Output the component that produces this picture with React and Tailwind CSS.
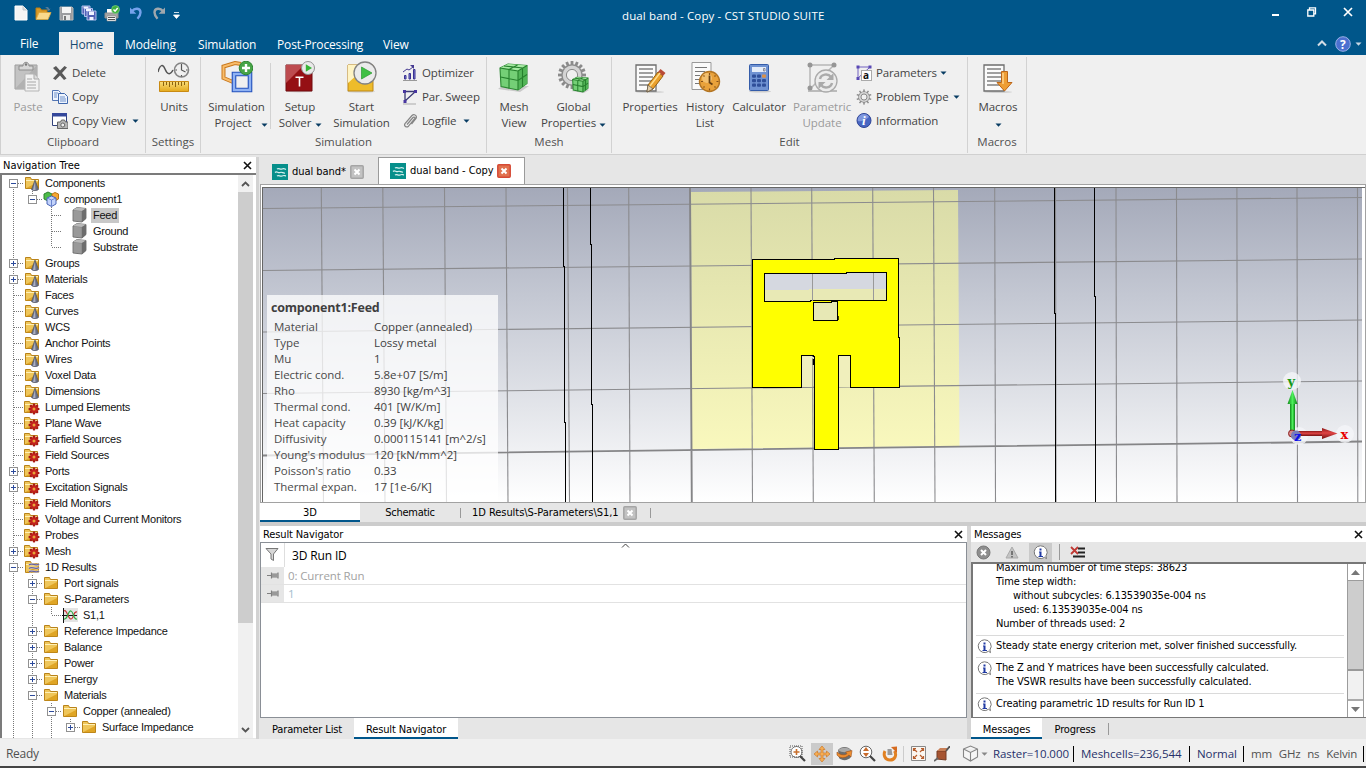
import React from "react";

const UI = "font-['Open_Sans',sans-serif]";
const TAHOMA = "font-['DejaVu_Sans_Condensed','Noto_Sans',sans-serif]";

function Caret({ className = "" }) {
  return (
    <svg width="7" height="4" viewBox="0 0 7 4" className={className}>
      <path d="M0.5 0.5h6L3.5 3.8z" fill="currentColor" />
    </svg>
  );
}

/* ---------- title bar icons ---------- */
const NewFile = () => (
  <svg width="14" height="16" viewBox="0 0 14 16"><path d="M1 1h8l4 4v10H1z" fill="#f4f4f4" stroke="#fff" /><path d="M9 1v4h4" fill="#dcdcdc" stroke="#b9c2c9" strokeWidth=".8" /></svg>
);
const OpenFile = () => (
  <svg width="17" height="16" viewBox="0 0 17 16"><path d="M1 14V3h4l1.500 2H12v3" fill="#d89a28" stroke="#b87c14" /><path d="M10 3c2-2 4-1 4 1l1.500-.5L14 6l-2.500-1.200 1.200-.3C12.500 3.500 11.500 3 10 3z" fill="#5f7f99" /><path d="M1 14.500L4 7.500h12L13 14.500z" fill="#f9d98b" stroke="#e0a83c" strokeWidth=".8" /></svg>
);
const SaveFile = () => (
  <svg width="15" height="15" viewBox="0 0 15 15"><path d="M1 1h12l1 1v12H1z" fill="#9c9da0" stroke="#b5b5b5" /><path d="M3 1h9v6H3z" fill="#f5f5f5" /><path d="M4 9h7v5H4z" fill="#e8e8e8" /><path d="M5 10h2v4H5z" fill="#777" /></svg>
);
const SaveAll = () => (
  <svg width="16" height="16" viewBox="0 0 16 16"><g stroke="#bfcaf4" strokeWidth=".9" fill="#5161b5"><path d="M1 1h8v8H1z" /><path d="M3.500 3.500h8v8h-8z" /><path d="M6 6h9v9H6z" /></g><path d="M2.500 1.500h5v2h-5zM5 4h5v2H5zM8 6.500h5v3.500H8zM8.500 12h4v3h-4z" fill="#f1f4ff" /></svg>
);
const PrintOk = () => (
  <svg width="16" height="17" viewBox="0 0 16 17"><path d="M3 4h8v5H3z" fill="#fff" /><path d="M1 8h13v5H1z" fill="#a6a6a6" stroke="#8e8e8e" /><path d="M3 11h9v5H3z" fill="#fafafa" stroke="#888" strokeWidth=".6" /><path d="M4 12.500h7M4 14.500h7" stroke="#555" /><circle cx="11.500" cy="4.500" r="4" fill="#3fb13f" stroke="#8bd88b" strokeWidth=".6" /><path d="M9.500 4.500l1.600 1.700 2.600-3.200" fill="none" stroke="#fff" strokeWidth="1.400" /></svg>
);
const Undo = ({ flip, color }) => (
  <svg width="14" height="14" viewBox="0 0 14 14" className={flip ? "-scale-x-100" : ""}><path d="M3 5C6 1.500 11.500 2 11.500 6.500c0 2.500-1.500 4.500-3 6.200" fill="none" stroke={color} strokeWidth="2.400" /><path d="M1 1.500v6.300h6.300z" fill={color} /></svg>
);

/* ---------- ribbon icons, 32px ---------- */
const PasteIcon = () => (
  <svg width="32" height="32" viewBox="0 0 32 32"><path d="M3 4h22v24H3z" fill="#c3c3c3" stroke="#9d9d9d" /><path d="M3 28L25 4v24z" fill="#b1b1b1" /><path d="M7 5h4c0-5 6-5 6 0h4v4H7z" fill="#d7d7d7" stroke="#8d8d8d" /><circle cx="14" cy="3.500" r="1.200" fill="#777" /><path d="M13 13h9l5 5v12H13z" fill="#f2f2f2" stroke="#b5b5b5" /><path d="M22 13v5h5" fill="#ddd" stroke="#aaa" /><path d="M15 18h5M15 21h9M15 24h9M15 27h9" stroke="#a8a8a8" /></svg>
);
const UnitsIcon = () => (
  <svg width="32" height="32" viewBox="0 0 32 32"><path d="M0 11C2 3 5 3 7 8s5 7 8 1" fill="none" stroke="#555" strokeWidth="1.500" /><circle cx="23.500" cy="9" r="7" fill="#f0f0f0" stroke="#858585" strokeWidth="1.600" /><path d="M23.500 4v5l4 2M23.500 3v1.500M23.500 14v1.500M17.500 9H19M28 9h1.500" fill="none" stroke="#555" strokeWidth="1.200" /><defs><linearGradient id="rul" x1="0" y1="0" x2="0" y2="1"><stop offset="0" stopColor="#f9df7d" /><stop offset="1" stopColor="#e4a91c" /></linearGradient></defs><path d="M1.500 20.500h29v10h-29z" fill="url(#rul)" stroke="#c98a12" /><path d="M5.500 21v4M8.500 21v3M11.500 21v5M14.500 21v3M17.500 21v5M20.500 21v3M23.500 21v4M26.500 21v3" stroke="#8b6310" /></svg>
);
const ProjectIcon = () => (
  <svg width="32" height="32" viewBox="0 0 32 32"><path d="M20 3l-6-1L2.500 5.500V17L12 21" fill="none" stroke="#c9771b" strokeWidth="4" /><path d="M20 3l-6-1L2.500 5.500V17L12 21" fill="none" stroke="#f8bd6c" strokeWidth="2" /><path d="M13 13h16v16H13z" fill="none" stroke="#2452bc" strokeWidth="4.600" /><path d="M13 13h16v16H13z" fill="none" stroke="#8fb2f3" strokeWidth="2.400" /><circle cx="25" cy="7" r="6.800" fill="#47a447" stroke="#2e8532" /><path d="M25 3v8M21 7h8" stroke="#fff" strokeWidth="2.400" /></svg>
);
const SetupIcon = () => (
  <svg width="32" height="32" viewBox="0 0 32 32"><ellipse cx="15" cy="30" rx="14" ry="1.500" fill="#d4d4d4" /><path d="M2 4h26v26H2z" fill="#951014" stroke="#710b0f" /><path d="M2 4h18L2 22z" fill="#bd4b4f" /><path d="M11.500 15.500h8v1.500h-3.200v8.500h-1.600V17h-3.200z" fill="#fff" /><circle cx="24" cy="7" r="6.500" fill="#e9e9e9" stroke="#919191" /><path d="M21.800 3.300v7.400L28 7z" fill="#35b435" /></svg>
);
const StartIcon = () => (
  <svg width="32" height="32" viewBox="0 0 32 32"><ellipse cx="15" cy="30.500" rx="14" ry="1.300" fill="#d4d4d4" /><path d="M2 4h25v26H2z" fill="#eebc2b" stroke="#bd8717" /><path d="M2 4h20L2 22z" fill="#fff4c4" /><circle cx="19" cy="12" r="11" fill="#ebebeb" stroke="#828282" strokeWidth="1.300" /><path d="M15.500 6v12L26 12z" fill="#3fc044" stroke="#299a30" strokeWidth=".7" /></svg>
);
const CubeShape = ({ w = 1.1 }) => (
  <g><path d="M2 7l8-4 19 1.500v18L20 29 3 25.500z" fill="#74cf76" stroke="#2c8832" strokeWidth={w} /><path d="M2 7l8-4 19 1.500L20 10z" fill="#a6eaa3" /><path d="M20 10l9-5.500v18L20 29z" fill="#52b557" /><path d="M2 7l18 3 9-5.500M20 10v19M11 8.500v19M24.500 7v19M2.500 16L20 19.500l9-6M6 5l19 2M11 8.500L19.500 4" fill="none" stroke="#26802d" strokeWidth={w} /></g>
);
const Cube = () => (
  <svg width="32" height="32" viewBox="0 0 32 32"><path d="M0 28l4-3h27l-9 6z" fill="#c9c9c9" /><CubeShape /></svg>
);
function Gear({ size = 16, r = 8, teeth = 10, color = "#8b8b8b", inner = "#f0f0f0" }) {
  const list = Array.from({ length: teeth }, (_, i) => (i * 360) / teeth);
  return (
    <g>
      {list.map((a) => (<rect key={a} x={size - r * 0.1} y={size - r} width={r * 0.2} height={r * 0.5} fill={color} transform={`rotate(${a} ${size} ${size})`} />))}
      <circle cx={size} cy={size} r={r * 0.76} fill={color} />
      <circle cx={size} cy={size} r={r * 0.67} fill="#d4d4d4" />
      <circle cx={size} cy={size} r={r * 0.4} fill={inner} stroke={color} />
    </g>
  );
}
const GlobalIcon = () => (
  <svg width="32" height="32" viewBox="0 0 32 32"><g transform="translate(-1 -1)"><Gear size={15} r={14} teeth={16} /></g><path d="M13 30l16-2 2 1-5 3z" fill="#ccc" /><g transform="translate(13.500 14.500) scale(.57)"><CubeShape w={1.8} /></g></svg>
);
const Page = ({ x = 2, w = 20, h = 26, y = 3 }) => (
  <g><path d={`M${x} ${y}h${w}v${h}h-${w}z`} fill="#fbfbfb" stroke="#6e6e6e" strokeWidth="1.300" />{[4, 8, 12, 16, 20].map((d) => (<path key={d} d={`M${x + 3} ${y + d}h${w - 6}`} stroke="#555" strokeWidth="1.100" />))}</g>
);
const PropsIcon = () => (
  <svg width="32" height="32" viewBox="0 0 32 32"><ellipse cx="16" cy="31" rx="14" ry="1" fill="#d0d0d0" /><Page y={4} /><path d="M14 24L24 11l5 4-10 13-6 3z" fill="#eaa02c" stroke="#94600f" /><path d="M24 11l2.500-3 5 4-2.500 3z" fill="#b94b36" /><path d="M14 24l5 4-6 3z" fill="#e6d1ad" stroke="#555" strokeWidth=".7" /><path d="M16 25L26 12" stroke="#ffdd8b" strokeWidth="1.400" /></svg>
);
const HistoryIcon = () => (
  <svg width="32" height="32" viewBox="0 0 32 32"><path d="M3 1.500h19v27H3z" fill="#fafafa" stroke="#999" /><path d="M6 6.500h12M6 10.500h10M6 14.500h5M6 18.500h4M6 22.500h5" stroke="#777" /><circle cx="20.500" cy="20.500" r="10" fill="#e9a23b" stroke="#b37523" strokeWidth="1.400" /><circle cx="18" cy="17" r="5" fill="#f5ca82" opacity=".75" /><path d="M20.500 14.500v7l3 2" fill="none" stroke="#623d13" strokeWidth="1.700" /><path d="M20.500 12v2M20.500 27.500v2M12 20.500h2M27.500 20.500h2M14.500 14.500l1 1M26.500 14.500l-1 1M14.500 26.500l1-1M26.500 26.500l-1-1" stroke="#86511a" strokeWidth="1.200" /></svg>
);
const CalcIcon = () => (
  <svg width="32" height="32" viewBox="0 0 32 32"><ellipse cx="17" cy="30.500" rx="11" ry="1" fill="#ccc" /><rect x="6.500" y="3.500" width="19" height="26" rx="1" fill="#6f92d2" stroke="#345ca9" /><path d="M9 6h14v5H9z" fill="#e5edf9" /><path d="M20.500 7.500h1.500v2.500h-1.500z" fill="none" stroke="#667" strokeWidth=".7" />{[13.500, 18, 22.500].map((y) => [9, 14, 19].map((x) => (<rect key={x + "-" + y} x={x} y={y} width="4" height="3.200" rx="1" fill={x === 19 && y === 13.500 ? "#db9148" : "#2f4f99"} />)))}</svg>
);
const UpdateIcon = () => (
  <svg width="32" height="32" viewBox="0 0 32 32"><path d="M2 30h29" stroke="#bbb" strokeWidth="2" /><path d="M4 4h24M4 4v24L28 4" fill="none" stroke="#b7b7b7" strokeWidth="1.500" /><circle cx="4" cy="4" r="2.500" fill="#969696" /><circle cx="28" cy="4" r="2.500" fill="#969696" /><circle cx="4" cy="27" r="2.500" fill="#969696" /><circle cx="20" cy="20" r="11" fill="#ececec" stroke="#aaa" strokeWidth="1.300" /><path d="M14 18c1-5 8-6 11-2M26 22c-1 5-8 6-11 2" fill="none" stroke="#aaa" strokeWidth="2.400" /><path d="M27.500 12v7h-7zM12.500 28v-7h7z" fill="#aaa" /></svg>
);
const MacrosIcon = () => (
  <svg width="32" height="32" viewBox="0 0 32 32"><ellipse cx="16" cy="31" rx="14" ry="1" fill="#d0d0d0" /><Page y={4} /><path d="M19.500 10.500h6v11h4.500L22.500 30l-7.500-8.500h4.500z" fill="#ee9e35" stroke="#bc6619" /><path d="M21 12v11" stroke="#ffd48f" strokeWidth="1.500" /></svg>
);

/* ---------- ribbon icons, 16px ---------- */
const S = ({ children }) => (<svg width="16" height="16" viewBox="0 0 16 16" className="shrink-0">{children}</svg>);
const DeleteI = () => <S><path d="M1 3l3-2 4 4.500L12.500 1 15 2.500 10 8l4.500 5.500L12 15l-4-4.500L3.500 15 1 13.500 6 8z" fill="#595959" /></S>;
const CopyI = () => <S><path d="M.5 1.500h6l2 2v8h-8z" fill="#eef4fe" stroke="#5375b3" /><path d="M6.500 4.500h6l3 3v7h-9z" fill="#eef4fe" stroke="#4168ac" /><path d="M2 4h4M2 6h3M2 8h3M8 8h5M8 10h6M8 12h6" stroke="#6f91c9" /></S>;
const CopyViewI = () => <S><path d="M.5 .5h14v12H.5z" fill="#fff" stroke="#32427c" /><path d="M0 0h15v3.500H0z" fill="#35489b" /><path d="M5.500 9h3l1-2h3l1 2h2.500v6.500H5.500z" fill="#b7b7b7" stroke="#666" /><circle cx="10.800" cy="12" r="2" fill="#eee" stroke="#666" /></S>;
const OptI = () => <S><path d="M2.500 10.500h1.500v3.500H2.500zM7 8.500h1.500V14H7zM11.500 4.500H13V14h-1.500z" fill="#8288d6" stroke="#3a3192" /><path d="M1 7l4-3 2 1 4-3" fill="none" stroke="#463a91" /><path d="M8 0h4v4z" fill="#463a91" /><path d="M1 15.500h14" stroke="#999" /></S>;
const SweepI = () => <S><path d="M2.500 2.500h11L3 12V2.500" fill="none" stroke="#3b3a75" strokeWidth="1.300" /><path d="M1 1h3v3H1zM12 1h3v3h-3zM1.500 11h3v3h-3z" fill="#4836a0" /><path d="M1 15h13" stroke="#aaa" /></S>;
const ClipI = () => <S><g fill="none" stroke="#858585" strokeWidth="1.200"><path d="M5 11.500l6-7c1-1 2.500 0 1.700 1.200L6.500 13.200C4.500 15 1.500 13 3 10.500L10 2.500c2-2 5.500 0 4 3L9.500 11" /></g></S>;
const ParamI = () => <S><path d="M2 2h12M2 2v11L13 3" fill="none" stroke="#7161c0" /><path d="M.5.5h3v3h-3zM12.500.5h3v3h-3zM.5 12h3v3h-3z" fill="#5948b4" /><rect x="5.500" y="5.500" width="10" height="10" fill="#fff" stroke="#aaa" /><text x="7" y="13.500" className="font-['Open_Sans'] text-[10px] font-bold" fill="#111">a</text></S>;
const GearI = () => <S><Gear size={8} r={7.6} teeth={10} /></S>;
const InfoI = () => <S><circle cx="8" cy="7.500" r="7" fill="#4866c2" stroke="#2e4496" /><path d="M8 1C3 1 1 6 2 8c3 1 8-1 11-4-1-2-3-3-5-3z" fill="#93aae7" opacity=".75" /><text x="6" y="12" className="font-['Liberation_Serif'] text-[13px] font-bold italic" fill="#fff">i</text></S>;

function Big({ icon, a, b, w, caret, dim, row = "gap-1.5" }) {
  return (
    <div className={`flex shrink-0 flex-col items-center pt-1.5 text-[11.5px] leading-4 tracking-[-0.05px] ${w} ${dim ? "text-[#9b9b9b]" : "text-[#444]"}`}>
      <div className="mb-1.5 h-8">{icon}</div>
      <div className="whitespace-nowrap">{a}</div>
      <div className={`flex h-4 items-center whitespace-nowrap ${row}`}>{b}{caret && <Caret className="mt-[3px] text-[#083c63]" />}</div>
    </div>
  );
}
function Small({ icon, label, caret, gap = "ml-0.5" }) {
  return (
    <div className="flex h-6 items-center gap-1 whitespace-nowrap text-[11.5px] tracking-[-0.14px] text-[#444]">{icon}<span>{label}</span>{caret && <Caret className={`text-[#083c63] ${gap}`} />}</div>
  );
}
function Group({ label, w, children }) {
  return (
    <section className={`mt-0.5 flex h-[96px] shrink-0 flex-col border-r border-[#d2d2d2] ${w}`}>
      <div className="-mt-0.5 flex h-[79px]">{children}</div>
      <div className="text-center text-[11.5px] leading-4 text-[#505050]">{label}</div>
    </section>
  );
}

function Ribbon() {
  return (
    <div className={`flex h-[100px] shrink-0 border-b border-l border-[#d0d0d0] bg-[#f0f0f0] ${UI}`}>
      <Group label="Clipboard" w="w-[145px]">
        <Big w="w-[54px]" icon={<PasteIcon />} a="Paste" dim />
        <div className="-ml-[3px] pt-[5.5px]">
          <Small icon={<DeleteI />} label="Delete" /><Small icon={<CopyI />} label="Copy" /><Small icon={<CopyViewI />} label="Copy View" caret />
        </div>
      </Group>
      <Group label="Settings" w="w-[55px]"><Big w="w-[56px]" icon={<UnitsIcon />} a="Units" /></Group>
      <Group label="Simulation" w="w-[286px]">
        <Big w="w-[71px]" icon={<ProjectIcon />} a="Simulation" b="Project" caret row="gap-[9px] pl-[9px]" />
        <div className="-ml-0.5 mt-2 h-[66px] w-px bg-[#d2d2d2]" />
        <Big w="w-[58px]" icon={<SetupIcon />} a="Setup" b="Solver" caret row="gap-1 pl-px" />
        <Big w="w-[65px]" icon={<StartIcon />} a="Start" b="Simulation" />
        <div className="pl-2 pt-[5.5px]"><Small icon={<OptI />} label="Optimizer" /><Small icon={<SweepI />} label="Par. Sweep" /><Small icon={<ClipI />} label="Logfile" caret gap="ml-[3px]" /></div>
      </Group>
      <Group label="Mesh" w="w-[125px]">
        <Big w="w-[54px]" icon={<Cube />} a="Mesh" b="View" />
        <Big w="w-[65px]" icon={<GlobalIcon />} a="Global" b="Properties" caret row="gap-[3px]" />
      </Group>
      <Group label="Edit" w="w-[356px]">
        <div className="w-2 shrink-0" />
        <Big w="w-[60px]" icon={<PropsIcon />} a="Properties" />
        <Big w="w-[50px]" icon={<HistoryIcon />} a="History" b="List" />
        <Big w="w-[58px]" icon={<CalcIcon />} a="Calculator" />
        <Big w="w-[68px]" icon={<UpdateIcon />} a="Parametric" b="Update" dim />
        <div className="pt-[5.5px]"><Small icon={<ParamI />} label="Parameters" caret gap="-ml-px" /><Small icon={<GearI />} label="Problem Type" caret gap="ml-px" /><Small icon={<InfoI />} label="Information" /></div>
      </Group>
      <Group label="Macros" w="w-[59px]"><Big w="w-[60px]" icon={<MacrosIcon />} a="Macros" caret /></Group>
    </div>
  );
}

/* ---------- navigation tree ---------- */
function Branch({ k }) {
  const box = "fmMpP".includes(k);
  const up = "mMpPtli".includes(k);
  const down = "fmpti".includes(k);
  return (
    <svg width="19" height="16" viewBox="0 0 19 16" className="shrink-0" shapeRendering="crispEdges">
      <g stroke="#777" strokeDasharray="1 1">
        {up && <path d="M9.500 0V8" />}{down && <path d="M9.500 8V16" />}
        {k !== "i" && k !== " " && <path d="M10 8.500h9" />}
      </g>
      {box && (<g><rect x="5.500" y="4.500" width="8" height="8" fill="#fff" stroke="#919191" /><path d="M7 8.500h5" stroke="#2c4a9b" />{"pP".includes(k) && <path d="M9.500 6v5" stroke="#2c4a9b" />}</g>)}
    </svg>
  );
}
const FolderShape = () => (<g><path d="M1.500 13.500V2.500h5l1 2h7v9z" fill="#efc65a" stroke="#b9831a" /><path d="M2 5.500h12" stroke="#fff0b5" /><path d="M2 13.200L14 7v6.200z" fill="#d99a14" opacity=".75" /></g>);
const TreeIcon = ({ t }) => {
  if (t === "folder") return <S><FolderShape /></S>;
  if (t === "cone") return <S><FolderShape /><path d="M11 5l-3.500 9.500c1 1.500 6 1.500 7 0z" fill="#6b7085" stroke="#454858" strokeWidth=".6" /><path d="M11 6.500l-2 8.500h2.500z" fill="#a9afc2" /></S>;
  if (t === "gear") return <S><g transform="translate(-1 0)"><FolderShape /></g><g>{[0, 45, 90, 135].map((a) => (<rect key={a} x="8.700" y="4.500" width="2.600" height="11" rx="1" fill="#a81917" transform={`rotate(${a} 10 10)`} />))}<circle cx="10" cy="10" r="3.600" fill="#c3201e" /><circle cx="10" cy="10" r="1.500" fill="#e9a53a" /></g></S>;
  if (t === "waves") return <S><FolderShape /><path d="M5 6c3-3 6 2 10-1M5 9.500c3-3 6 2 10-1M5 13c3-3 6 2 10-1" fill="none" stroke="#e9dcc0" strokeWidth="2.400" /><path d="M5 6c3-3 6 2 10-1M5 9.500c3-3 6 2 10-1M5 13c3-3 6 2 10-1" fill="none" stroke="#66639f" strokeWidth="1.300" /></S>;
  if (t === "block") return <S><path d="M1 3l4-2.500 9 1v10L10 15 1 14z" fill="#848484" stroke="#606060" strokeWidth=".8" /><path d="M1 3l4-2.500 9 1-4 2.500z" fill="#b9b9b9" /><path d="M1.500 3.500l8 1v10l-8-1z" fill="#999" /><path d="M10 4l4-2.500v10L10 15z" fill="#6d6d6d" /></S>;
  if (t === "comp") return <S><path d="M1 3l4-2 4 2v5L5 10 1 8z" fill="#4dbb48" stroke="#29812d" /><path d="M9 3l3-1.500L15.500 3v5L12 10 9 8z" fill="#f5a632" stroke="#bb7412" /><path d="M4 7l4.500-2L13 7v6l-4.500 2.500L4 13z" fill="#c3d3fa" stroke="#4864b8" /><path d="M4 7l4.500 2L13 7M8.500 9v6" stroke="#5572c4" fill="none" strokeWidth=".8" /></S>;
  return <S><rect x="1" y="1" width="15" height="14" fill="#e4e4e4" /><path d="M1.500 1v15M0 8.500h15" stroke="#111" /><path d="M2 4c3-2 4 8 7 8s2-8 6-7" fill="none" stroke="#c73535" strokeWidth="1.200" /><path d="M2 12c4 1 4-9 7-8s2 9 6 8" fill="none" stroke="#31ad43" strokeWidth="1.200" /></S>;
};
const TREE = [
  ["f", "cone", "Components"], ["iM", "comp", "component1"], ["i t", "block", "Feed"], ["i t", "block", "Ground"], ["i l", "block", "Substrate"],
  ["p", "cone", "Groups"], ["p", "cone", "Materials"], ["t", "cone", "Faces"], ["t", "cone", "Curves"], ["t", "cone", "WCS"], ["t", "cone", "Anchor Points"],
  ["t", "cone", "Wires"], ["t", "cone", "Voxel Data"], ["t", "cone", "Dimensions"], ["t", "gear", "Lumped Elements"], ["t", "gear", "Plane Wave"],
  ["t", "gear", "Farfield Sources"], ["t", "gear", "Field Sources"], ["p", "gear", "Ports"], ["p", "gear", "Excitation Signals"], ["t", "gear", "Field Monitors"],
  ["t", "gear", "Voltage and Current Monitors"], ["t", "gear", "Probes"], ["p", "gear", "Mesh"], ["m", "waves", "1D Results"], ["ip", "folder", "Port signals"],
  ["im", "folder", "S-Parameters"], ["iil", "plot", "S1,1"], ["ip", "folder", "Reference Impedance"], ["ip", "folder", "Balance"], ["ip", "folder", "Power"],
  ["ip", "folder", "Energy"], ["im", "folder", "Materials"], ["iim", "folder", "Copper (annealed)"], ["iiiP", "folder", "Surface Impedance"],
];
const CloseX = () => (<svg width="9" height="9" viewBox="0 0 9 9"><path d="M1 1l7 7M8 1L1 8" stroke="#111" strokeWidth="1.600" /></svg>);

function NavTree() {
  return (
    <aside className="flex w-[256px] shrink-0 flex-col">
      <div className={`flex h-4 items-center justify-between bg-white pl-[3px] pr-1 text-[11px] text-black ${TAHOMA}`}><span className="pt-0.5 tracking-[0px]">Navigation Tree</span><CloseX /></div>
      <div className="flex h-[565px] overflow-hidden border-l-2 border-t-2 border-[#7b7b7b] bg-white">
        <div className="w-[236px] pl-0.5">
          {TREE.map(([cells, icon, label], i) => (
            <div key={i} className="flex h-4 items-center">
              {cells.split("").map((k, j) => <Branch key={j} k={k} />)}
              {icon === "block" && <span className="w-[10px] shrink-0" />}
              <span className="ml-px"><TreeIcon t={icon} /></span>
              <span className={`ml-[3px] whitespace-nowrap px-0.5 font-['Liberation_Sans',sans-serif] text-[11px] leading-[15px] tracking-[-0.24px] text-[#111] ${label === "Feed" ? "bg-[#c8c8c8]" : ""}`}>{label}</span>
            </div>
          ))}
          <div className="flex h-1.5 overflow-hidden"><Branch k="i" /><Branch k="i" /><Branch k="i" /></div>
        </div>
        <div className="flex w-[15px] shrink-0 flex-col items-center justify-between bg-[#f0f0f0]">
          <div className="flex h-[17px] items-center"><svg width="9" height="6" viewBox="0 0 9 6"><path d="M1 5l3.500-3.500L8 5" fill="none" stroke="#555" strokeWidth="1.800" /></svg></div>
          <div className="mb-auto h-[431px] w-full bg-[#cdcdcd]" />
          <div className="flex h-[17px] items-center"><svg width="9" height="6" viewBox="0 0 9 6"><path d="M1 1l3.500 3.500L8 1" fill="none" stroke="#555" strokeWidth="1.800" /></svg></div>
        </div>
      </div>
    </aside>
  );
}

/* ---------- 3D view ---------- */
const V = [[321.3, 323.5], [382.8, 385], [444.5, 446.500], [506, 508], [567.5, 569.5], [628.7, 630], [751, 752.5], [811.7, 813.3], [872.7, 874.3], [933.5, 935], [994.7, 995.5], [1055.5, 1056], [1116, 1116.500], [1176.5, 1177], [1236.9, 1237.3], [1297, 1297.5], [1357.5, 1357.8]];
const H = [[208.5, 197.5], [270.5, 259], [332, 320], [393.5, 381]];
const INFO = [["Material", "Copper (annealed)"], ["Type", "Lossy metal"], ["Mu", "1"], ["Electric cond.", "5.8e+07 [S/m]"], ["Rho", "8930 [kg/m^3]"], ["Thermal cond.", "401 [W/K/m]"], ["Heat capacity", "0.39 [kJ/K/kg]"], ["Diffusivity", "0.000115141 [m^2/s]"], ["Young's modulus", "120 [kN/mm^2]"], ["Poisson's ratio", "0.33"], ["Thermal expan.", "17 [1e-6/K]"]];

function Scene() {
  return (
    <svg width="1099" height="314" viewBox="263 188 1099 314" className="block">
      <defs>
        <linearGradient id="sky" x1="0" y1="0" x2="0" y2="1"><stop offset="0" stopColor="#a4a9b9" /><stop offset=".35" stopColor="#c4c8d3" /><stop offset=".7" stopColor="#e3e5ea" /><stop offset="1" stopColor="#fff" /></linearGradient>
        <linearGradient id="sub" x1="0" y1="0" x2="0" y2="1"><stop offset="0" stopColor="#d9dba8" /><stop offset="1" stopColor="#f9f8bd" /></linearGradient>
        <linearGradient id="ax" x1="0" y1="0" x2="1" y2="0"><stop offset="0" stopColor="#11891b" /><stop offset=".5" stopColor="#4cf05a" /><stop offset="1" stopColor="#0d8017" /></linearGradient>
        <linearGradient id="axr" x1="0" y1="0" x2="0" y2="1"><stop offset="0" stopColor="#8c1717" /><stop offset=".45" stopColor="#e04545" /><stop offset="1" stopColor="#741010" /></linearGradient>
      </defs>
      <path d="M263 188h1100v314H263z" fill="url(#sky)" />
      <path d="M691 192l267-2 1.500 256L692 449z" fill="url(#sub)" />
      <g stroke="#8b8b8e" strokeWidth="1.100">
        {V.map(([a, b]) => <path key={a} d={`M${a} 188L${b} 502`} />)}
        {H.map(([a, b]) => <path key={a} d={`M263 ${a}L1363 ${b}`} />)}
      </g>
      <path d="M263 455.500L1363 441.500M690 188l1.800 314" stroke="#858587" strokeWidth="1.900" />
      <path d="M563.500 188v78h1v156h1v80M590.500 188v56h1v160h1v98M1054.500 188v125h1v189M1094.500 188v108h1v206" fill="none" stroke="#000" shapeRendering="crispEdges" />
      <path d="M752.500 259.500h82v-1h64v79h1v50h-49v-32h-12v94h-24v-93h-1v-1h-12v32h-49z" fill="#ff0" stroke="#000" shapeRendering="crispEdges" />
      <path d="M802 357h11v30h-11zM839 356h11v31h-11z" fill="#f0efbc" />
      <path d="M812.500 358v29" stroke="#aaa995" />
      <path d="M764.500 273.500h82v-1h40v28h-76v1h-46z" fill="#e8e9b5" stroke="#000" shapeRendering="crispEdges" />
      <path d="M765 274h82v-1h39v16h-77v1h-44z" fill="#d5d8e0" />
      <path d="M812.500 274v27M873.500 273v27" stroke="#99999a" />
      <path d="M813.500 302.500h18v-1h6v19h-24z" fill="#e7e8b5" stroke="#000" shapeRendering="crispEdges" />
      <path d="M838 316v4M813.500 359v6" stroke="#000" strokeWidth="1.500" />
      <g fill="#f5f6f9" opacity=".8"><circle cx="1292" cy="381" r="9" /><circle cx="1345" cy="434" r="9" /><circle cx="1299" cy="436" r="9" /></g>
      <path d="M1290 403h5v31h-5z" fill="url(#ax)" /><path d="M1292.500 390l5 14h-10z" fill="url(#ax)" />
      <path d="M1290 431h33v5h-33z" fill="url(#axr)" /><path d="M1322 428l15.500 5.500-15.500 5.500z" fill="url(#axr)" />
      <circle cx="1292" cy="433.500" r="3.500" fill="#d48a8a" stroke="#8e2020" /><circle cx="1296" cy="435.500" r="5" fill="#777db8" />
      <g className="font-['DejaVu_Serif','Liberation_Serif',serif] text-[13px] font-bold"><text x="1287.500" y="386" fill="#159815">y</text><text x="1340.500" y="438.500" fill="#e80000">x</text><text x="1294" y="441" fill="#0c10e8">z</text></g>
    </svg>
  );
}

const CstLogo = () => (<svg width="16" height="16" viewBox="0 0 16 16"><path d="M0 0h16v16H0z" fill="#068f8b" /><path d="M5 5c2-1.500 3 1 5 0s2-.5 4 .5M3 8.500c2-2 3 1 5 0s3 1 5 .5M5 12c2-1.500 3 1 5 0s2-.5 4 0" fill="none" stroke="#d8f1ef" strokeWidth="1.200" /></svg>);
function CloseBox({ red }) {
  return (<svg width="14" height="14" viewBox="0 0 14 14"><rect x=".8" y=".8" width="12.400" height="12.400" rx="1" fill={red ? "#e1714e" : "#c2c2c2"} stroke={red ? "#d64a35" : "#a5a5a5"} strokeWidth="1.500" /><path d="M4.500 4.500l5 5M9.500 4.500l-5 5" stroke="#fff" strokeWidth="2" /></svg>);
}

function Viewport() {
  return (
    <>
      <div className={`mb-px flex h-[26px] shrink-0 items-end text-[11px] text-black ${TAHOMA}`}>
        <div className="flex h-[26px] w-[118px] items-center gap-1 pl-3 pt-1"><CstLogo /><span className="tracking-[-0.05px]">dual band*</span><CloseBox /></div>
        <div className="flex h-[27px] w-[147px] items-center gap-[3px] self-start border-l border-r border-t border-[#9a9a9a] bg-white pl-[11px]"><CstLogo /><span className="ml-px whitespace-nowrap pt-px tracking-[-0.05px]">dual band - Copy</span><CloseBox red /></div>
      </div>
      <div className="h-[319px] shrink-0 border border-[#a2a2a2] bg-white pl-px pt-0.5">
        <div className="relative h-[315px] border-l border-t border-[#666]">
          <Scene />
          <div className={`absolute left-1 top-[107px] h-[207px] w-[231px] bg-white/75 pl-1 pt-1 text-[#3f3f3f] ${UI}`}>
            <div className="text-[12.5px] font-bold leading-[18px] tracking-[-0.2px]">component1:Feed</div>
            <div className="grid grid-cols-[100px_1fr] pl-[3px] pt-[2px] text-[11.500px] leading-4 tracking-[-0.05px]">
              {INFO.map(([a, b]) => (<React.Fragment key={a}><span className="whitespace-nowrap text-[#4a4a4a]">{a}</span><span className="whitespace-nowrap">{b}</span></React.Fragment>))}
            </div>
          </div>
        </div>
      </div>
      <div className={`flex h-[19px] shrink-0 text-[11px] tracking-[-0.05px] text-black ${TAHOMA}`}>
        <div className="flex w-[100px] items-center justify-center border-b-2 border-[#00568b] bg-white pt-1">3D</div>
        <div className="flex w-[100px] items-center justify-center pt-0.5 tracking-[-0.25px]">Schematic</div>
        <div className="flex items-center whitespace-nowrap"><span className="h-2.5 w-px bg-[#999]" /><span className="ml-[11px] mr-[5px] pt-0.5">1D Results\S-Parameters\S1,1</span><CloseBox /><span className="ml-[13px] h-2.5 w-px bg-[#999]" /></div>
      </div>
    </>
  );
}

/* ---------- lower docks ---------- */
const Pin = () => (<svg width="12" height="9" viewBox="0 0 12 9"><path d="M0 4.500h4M4.500 1.500v6M11 1.500v6M5 3h6M5 6h6" stroke="#808080" strokeWidth="1.200" /><path d="M5 3h6v3H5z" fill="#999" /></svg>);
const MsgInfo = () => (<svg width="15" height="15" viewBox="0 0 15 15" className="shrink-0"><path d="M7.500.8a6.400 6.400 0 1 0 4 11.500l2 1.300-.6-2.600A6.400 6.400 0 0 0 7.500.8z" fill="#fff" stroke="#777" /><path d="M6.500 3.500h2v2h-2zM6 6.500h2.500V11H10v1H5.500v-1h1V7.500H6z" fill="#203aa3" /></svg>);
function Tabs({ items }) {
  return (
    <div className="flex h-[21px] items-center">
      {items.map(([t, w, on]) => (<div key={t} className={`flex h-full items-center justify-center whitespace-nowrap ${w} ${on ? "border-b-2 border-[#00568b] bg-white pt-[6px]" : "pt-[3px]"}`}>{t}</div>))}
    </div>
  );
}
function ResultNav() {
  return (
    <section className={`flex w-[707px] flex-col text-[11px] tracking-[-0.12px] text-black ${TAHOMA}`}>
      <div className="flex h-4 items-center justify-between bg-white pl-[3px] pr-1"><span className="pt-0.5">Result Navigator</span><CloseX /></div>
      <div className={`h-[176px] border border-[#8a8f96] bg-white ${UI}`}>
        <div className="flex h-6">
          <div className="flex w-6 items-center justify-center border-r border-[#dedede]"><svg width="14" height="15" viewBox="0 0 14 15" className="-ml-0.5 -mt-0.5"><path d="M1 1.500h12L8.500 7v6.500L6 12V7z" fill="#d7d7d7" stroke="#777" /></svg></div>
          <div className="flex items-center pl-[7px] pt-0.5 text-[12px] tracking-[-0.15px]">3D Run ID</div>
          <svg width="9" height="6" viewBox="0 0 9 6" className="ml-[274px]"><path d="M1 4.500L4.500 1 8 4.500" fill="none" stroke="#444" /></svg>
        </div>
        {["0: Current Run", "1"].map((t, i) => (
          <div key={t} className="flex h-[18px] border-b border-[#e2e2e2] text-[11.500px]"><div className="flex w-[23px] items-center justify-center bg-[#e6e6e6]"><Pin /></div><div className={`flex items-center pl-1 ${i ? "text-[#a4bdce]" : "text-[#a2a2a2]"}`}>{t}</div></div>
        ))}
      </div>
      <div className="flex items-center"><Tabs items={[["Parameter List", "w-[94px]"], ["Result Navigator", "w-[104px]", true]]} /></div>
    </section>
  );
}
function Message({ children }) {
  return (<div className="flex border-b border-[#dadada] pb-1 pt-[3px]"><span className="-mb-1 w-5 shrink-0 pl-px"><MsgInfo /></span><div className="whitespace-nowrap leading-[14px]">{children}</div></div>);
}
function Messages() {
  return (
    <section className={`flex w-[395px] flex-col text-[11px] tracking-[-0.15px] text-black ${TAHOMA}`}>
      <div className="flex h-4 items-center justify-between bg-white pl-[3px] pr-[3px]"><span className="pt-0.5">Messages</span><CloseX /></div>
      <div className="flex h-[20px] items-center">
        <svg width="15" height="15" viewBox="0 0 15 15" className="ml-[5px]"><circle cx="7.500" cy="7.500" r="6.500" fill="#8e8e8e" stroke="#777" /><path d="M5 5l5 5M10 5l-5 5" stroke="#fff" strokeWidth="2" /></svg>
        <svg width="14" height="13" viewBox="0 0 14 13" className="ml-[14px]"><path d="M7 1l6 11H1z" fill="#c4c4c4" stroke="#aaa" /><path d="M7 5v4M7 10v1.500" stroke="#555" strokeWidth="1.400" /></svg>
        <span className="ml-2.5 flex h-[19px] w-[23px] items-center justify-center bg-[#cacaca]"><MsgInfo /></span>
        <span className="ml-[7px] h-4 w-px bg-[#999]" />
        <svg width="15" height="13" viewBox="0 0 15 13" className="ml-[10px]"><path d="M8 2.500h7M8 6.500h7M3 10.500h12" stroke="#222" strokeWidth="1.800" /><path d="M1 1l7 7M8 1L1 8" stroke="#c03934" strokeWidth="1.800" /></svg>
      </div>
      <div className="flex h-[156px] overflow-hidden border-b border-l-2 border-t-2 border-[#777] bg-white">
        <div className="flex w-[374px] flex-col justify-end pb-1.5 pl-[3px]">
          <div className="flex w-[368px] border-b border-[#dadada] pb-1"><span className="w-5 shrink-0" /><div className="whitespace-nowrap leading-[14px]">Maximum number of time steps: 38623<br />Time step width:<br /><span className="ml-[17px]">without subcycles: 6.13539035e-004 ns</span><br /><span className="ml-[17px]">used: 6.13539035e-004 ns</span><br />Number of threads used: 2</div></div>
          <div className="w-[368px]"><Message>Steady state energy criterion met, solver finished successfully.</Message>
            <Message>The Z and Y matrices have been successfully calculated.<br />The VSWR results have been successfully calculated.</Message></div>
          <div className="flex pt-[3px]"><span className="-mb-1 w-5 shrink-0 pl-px"><MsgInfo /></span><div className="leading-[14px]">Creating parametric 1D results for Run ID 1</div></div>
        </div>
        <div className="flex w-[17px] flex-col border-x border-[#9c9c9c]">
          <div className="flex h-[17px] items-center justify-center border-b border-[#9c9c9c]"><svg width="9" height="5"><path d="M0 5l4.500-5L9 5z" fill="#777" /></svg></div>
          <div className="h-[90px] border-b-2 border-[#999] bg-[#cdcdcd]" />
          <div className="h-[30px] border-b-2 border-[#aaa] bg-[#f1f1f1]" />
          <div className="flex flex-1 items-center justify-center"><svg width="9" height="5"><path d="M0 0l4.500 5L9 0z" fill="#777" /></svg></div>
        </div>
      </div>
      <div className="flex items-center"><Tabs items={[["Messages", "w-[71px]", true], ["Progress", "w-[66px]"]]} /><span className="h-3 w-px bg-[#999]" /></div>
    </section>
  );
}

/* ---------- status bar ---------- */
const Mag = ({ children }) => (<svg width="17" height="17" viewBox="0 0 17 17">{children}<path d="M11 11l5 5" stroke="#444" strokeWidth="2.200" /></svg>);
function StatusBar() {
  return (
    <footer className={`flex h-[29px] shrink-0 items-center border-b-2 border-[#454545] bg-[#f0f0f0] pt-0.5 text-[11.500px] ${UI}`}>
      <span className="w-[789px] pl-1.5 text-[12px] tracking-[-0.3px] text-[#505050]">Ready</span>
      <Mag><circle cx="7.500" cy="7" r="5.500" fill="#fff" stroke="#777" /><path d="M1 1h12v11H1z" fill="none" stroke="#555" strokeDasharray="1 1" /><path d="M7.500 4v6M4.500 7h6" stroke="#c8702e" strokeWidth="1.600" /></Mag>
      <span className="ml-[5px] flex h-[22px] w-[22px] items-center justify-center bg-[#cbcbcb]"><svg width="16" height="16" viewBox="0 0 16 16"><path d="M8 0l3 3.500H9V7h3.500V5L16 8l-3.500 3V9H9v3.500h2L8 16l-3-3.500h2V9H3.500v2L0 8l3.500-3v2H7V3.500H5z" fill="#f5ae55" stroke="#cf7928" strokeWidth=".7" /></svg></span>
      <svg width="17" height="17" viewBox="0 0 17 17" className="ml-[3px]"><path d="M2 5c3-4 10-4 13 0v7c-3 4-9 4-12 1z" fill="#6c6c6c" /><path d="M2 5c4-3 9-3 13 0-4 3-9 3-13 0z" fill="#aaa" /><path d="M1 7c4 4 9 3 10 1.500L9.500 7 16 5.500 15 12l-2-2c-4 4-10 3-12 0z" fill="#ed8d30" stroke="#9b511b" strokeWidth=".6" /></svg>
      <span className="ml-1.5"><Mag><circle cx="7" cy="7" r="5.800" fill="#fff" stroke="#666" /><path d="M7 2l3 4H4zM7 12l3-4H4z" fill="#c86b2c" /></Mag></span>
      <svg width="16" height="16" viewBox="0 0 16 16" className="ml-1.5"><path d="M3 5c-2 4 0 9 5 9s7-5 4.500-9" fill="none" stroke="#e18122" strokeWidth="3" /><path d="M9 1l6-.5V7z" fill="#d56b20" /><path d="M5.500 3h4l1 6h-5z" fill="#999" /></svg>
      <span className="ml-[5px] h-4 w-px bg-[#ccc]" />
      <svg width="15" height="15" viewBox="0 0 15 15" className="ml-[7px]"><path d="M.5.5h14v14H.5z" fill="#fbf6f0" stroke="#888" /><g stroke="#b75e2e" strokeWidth="1.200" fill="none"><path d="M2.500 5V2.500H5M2.500 2.500L6 6M10 2.500h2.500V5M12.500 2.500L9 6M2.500 10v2.500H5M2.500 12.500L6 9M10 12.500h2.500V10M12.500 12.500L9 9" /></g></svg>
      <svg width="16" height="16" viewBox="0 0 16 16" className="ml-2"><path d="M3 5h9v9l-9-1z" fill="#a65431" stroke="#763d26" /><path d="M3 5L6 2h8l-2 3z" fill="#c98058" /><path d="M12 5l4-5" stroke="#555" strokeWidth="1.800" /><path d="M0 15l4-3" stroke="#666" strokeWidth="1.800" /></svg>
      <svg width="17" height="17" viewBox="0 0 17 17" className="ml-3"><path d="M1.500 4l7-3 7 3v8l-7 4-7-4zM1.500 4l7 3.500 7-3.500M8.500 7.500V16" fill="#f5f5f5" stroke="#858585" strokeWidth="1.100" /></svg>
      <Caret className="ml-0.5 text-[#888]" />
      <div className="ml-[5px] flex items-center whitespace-nowrap tracking-[-0.06px] text-[#26306a]">
        <span className="w-[80px]">Raster=10.000</span><i className="h-4 w-px bg-black" />
        <span className="w-[115px] pl-[7px]">Meshcells=236,544</span><i className="h-4 w-px bg-black" />
        <span className="w-[53px] pl-[7px]">Normal</span><i className="h-4 w-px bg-black" />
        <span className="flex w-[119px] gap-[7px] pl-[7px] tracking-[-0.25px] text-[#505050]"><b className="font-normal">mm</b><b className="font-normal">GHz</b><b className="font-normal">ns</b><b className="font-normal">Kelvin</b></span><i className="h-4 w-px bg-black" />
      </div>
    </footer>
  );
}

export default function App() {
  return (
    <div className="flex h-[768px] w-[1366px] flex-col overflow-hidden bg-[#e6e6e6]">
      <header className={`h-[55px] shrink-0 bg-[#00568a] text-white ${UI}`}>
        <div className="flex h-8 items-center">
          <div className="flex h-8 w-[622px] items-center gap-[7px] pb-1.5 pl-3.5"><NewFile /><OpenFile /><SaveFile /><SaveAll /><PrintOk /><span className="ml-0.5 flex gap-[9px]"><Undo color="#75a2ec" /><Undo flip color="#9fa7ad" /></span>
            <svg width="7" height="7" viewBox="0 0 7 7" className="mt-1"><path d="M1 .5h5M.5 3h6L3.500 6.500z" fill="#fff" stroke="#fff" strokeWidth=".8" /></svg></div>
          <span className="w-[650px] whitespace-nowrap text-[11.500px] tracking-[0.12px]">dual band - Copy - CST STUDIO SUITE</span>
          <div className="flex items-center gap-[26px] pb-2"><svg width="9" height="9"><path d="M0 7h7" stroke="#fff" strokeWidth="2" /></svg><svg width="10" height="10"><path d="M2.500 3V.8h6v6H7M.8 3h6v6h-6z" fill="none" stroke="#fff" strokeWidth="1.300" /></svg><svg width="10" height="10"><path d="M1 1l8 8M9 1L1 9" stroke="#fff" strokeWidth="1.700" /></svg></div>
        </div>
        <nav className="flex h-[23px] items-center text-[12px] tracking-[-0.15px]">
          <span className="w-[59px] pl-5">File</span>
          <span className="flex h-[23px] w-[55px] items-center justify-center bg-[#f0f0f0] pt-0.5 text-[#174a71]">Home</span>
          <span className="w-[73px] pl-[11px] pt-0.5">Modeling</span><span className="w-[79px] pl-[11px] pt-0.5">Simulation</span><span className="w-[106px] pl-[11px] pt-0.5">Post-Processing</span><span className="w-[945px] pl-[11px] pt-0.5">View</span>
          <svg width="10" height="7" viewBox="0 0 10 7"><path d="M1 5.500L5 1.500l4 4" fill="none" stroke="#d4dde5" strokeWidth="2" /></svg>
          <svg width="16" height="16" viewBox="0 0 16 16" className="ml-2 shrink-0"><circle cx="8" cy="8" r="7.300" fill="#4c70d0" stroke="#99b0e5" /><text x="5" y="12.500" className="font-['Open_Sans'] text-[12px] font-bold" fill="#fff">?</text></svg>
          <Caret className="ml-1 text-[#c7d7e3]" />
        </nav>
      </header>
      <Ribbon />
      <div className="mt-[2px] flex h-[582px] shrink-0">
        <NavTree />
        <main className="flex w-[1110px] flex-col border-l-[3px] border-[#d2d2d2] pl-px">
          <Viewport />
          <div className="h-1 shrink-0 bg-[#cccccc]" />
          <div className="flex h-[213px] shrink-0"><ResultNav /><div className="w-1 bg-[#d4d4d4]" /><Messages /></div>
        </main>
      </div>
      <StatusBar />
    </div>
  );
}
